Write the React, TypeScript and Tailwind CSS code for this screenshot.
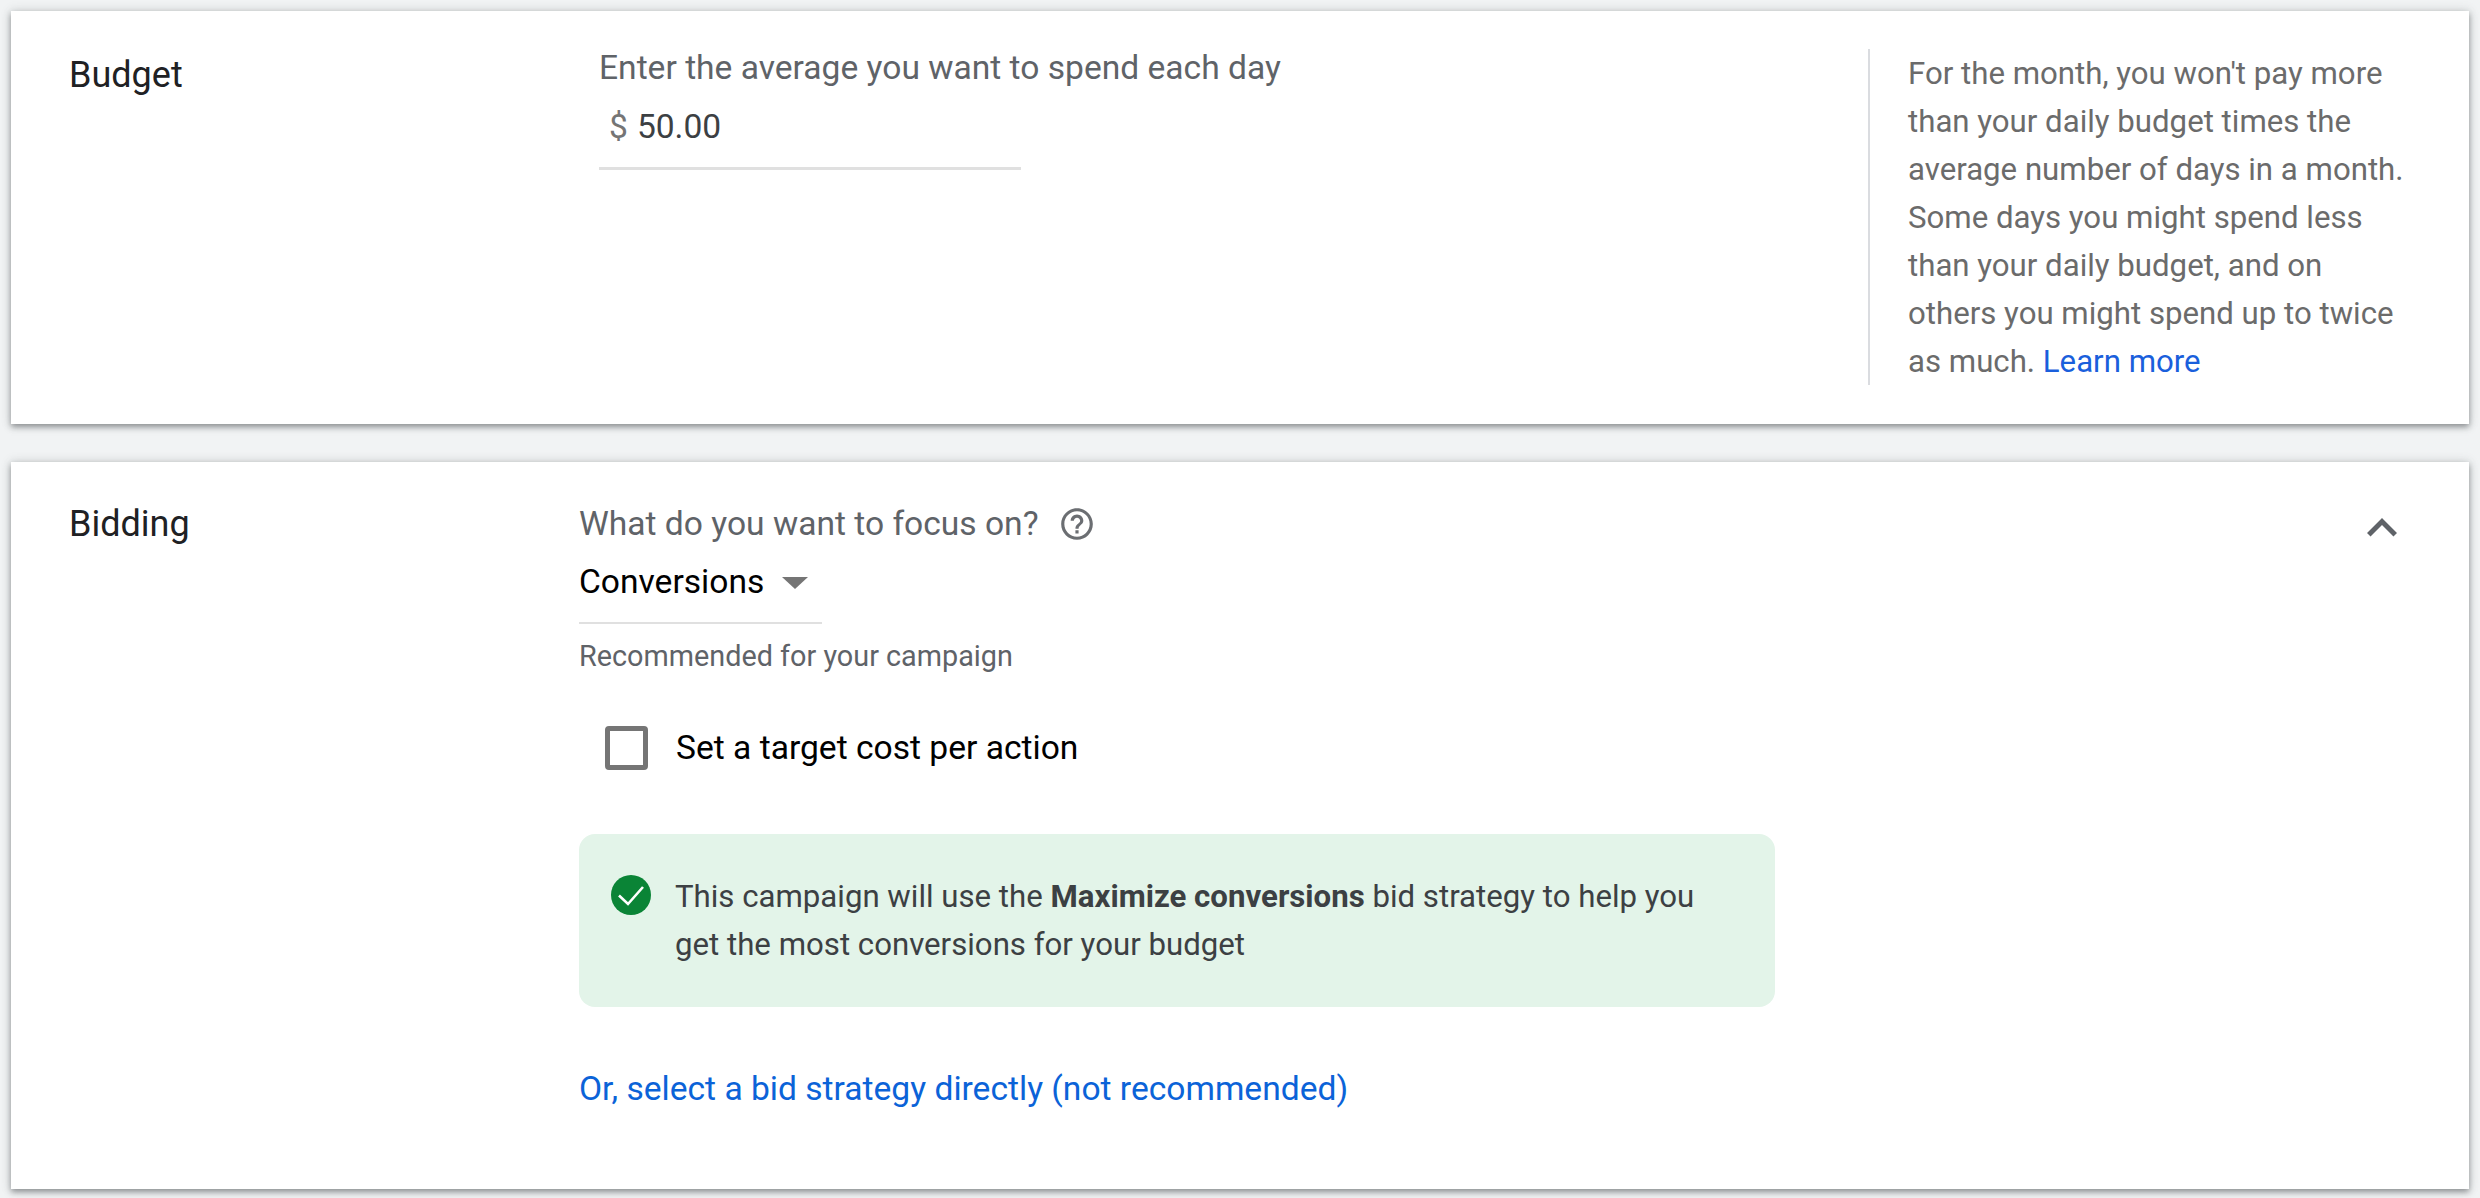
function CheckBadge() {
  return (
    <svg viewBox="0 0 40 40" className="w-[40px] h-[40px] shrink-0">
      <circle cx="20" cy="20" r="20" fill="#0a8436" />
      <path d="M8 20.5l9 8.5L32 12" fill="none" stroke="#ffffff" strokeWidth="2.6" />
    </svg>
  );
}

function HelpIcon() {
  return (
    <svg viewBox="0 0 24 24" className="w-[38px] h-[38px] fill-[#6b6e72]">
      <path d="M11 18h2v-2h-2v2zm1-16C6.48 2 2 6.48 2 12s4.48 10 10 10 10-4.48 10-10S17.52 2 12 2zm0 18c-4.41 0-8-3.59-8-8s3.59-8 8-8 8 3.59 8 8-3.59 8-8 8zm0-14c-2.21 0-4 1.79-4 4h2c0-1.1.9-2 2-2s2 .9 2 2c0 2-3 1.75-3 5h2c0-2.25 3-2.5 3-5 0-2.21-1.79-4-4-4z" />
    </svg>
  );
}

export default function App() {
  return (
    <div className="h-[1198px] bg-[#f1f3f4] px-[11px] pt-[11px] font-['Roboto',sans-serif] overflow-hidden">
      {/* Budget */}
      <section className="h-[413px] bg-white shadow-[0_3px_6px_rgba(60,64,67,0.5),0_0_10px_rgba(60,64,67,0.18)] flex pl-[58px]">
        <h2 className="w-[530px] shrink-0 pt-[40px] text-[36px] leading-[48px] text-[#202124] font-normal">Budget</h2>
        <div className="w-[422px] shrink-0 pt-[35px]">
          <p className="text-[33.6px] leading-[44px] text-[#5f6368] whitespace-nowrap">Enter the average you want to spend each day</p>
          <div className="h-[80px] border-b-[3px] border-[#e0e0e0] flex items-start pl-[10px] gap-[9px] pt-[8px] text-[33.6px] leading-[58px]">
            <span className="text-[#757575]">$</span>
            <span className="text-[#3c4043]">50.00</span>
          </div>
        </div>
        <aside className="ml-[847px] mt-[38px] h-[336px] w-[545px] border-l-2 border-[#dadce0] pl-[38px] pt-[1px] text-[31.2px] leading-[48px] text-[#6b6b6b]">
          For the month, you won't pay more than your daily budget times the average number of days in a month. Some days you might spend less than your daily budget, and on others you might spend up to twice as much. <a className="text-[#1a5fdc]">Learn more</a>
        </aside>
      </section>

      {/* Bidding */}
      <section className="mt-[38px] h-[727px] bg-white shadow-[0_3px_6px_rgba(60,64,67,0.5),0_0_10px_rgba(60,64,67,0.18)] flex pl-[58px] relative">
        <h2 className="w-[510px] shrink-0 pt-[38px] text-[36px] leading-[48px] text-[#202124] font-normal">Bidding</h2>
        <div className="w-[1200px] pt-[40px]">
          <div className="flex items-center gap-[19px] h-[44px]">
            <span className="text-[33.6px] text-[#5f6368]">What do you want to focus on?</span>
            <HelpIcon />
          </div>
          <div className="mt-[14px] w-[243px] h-[64px] border-b-2 border-[#e0e0e0] flex items-start gap-[18px] text-[33.6px] leading-[44px] text-black">
            <span>Conversions</span>
            <span className="mt-[17px] w-0 h-0 border-x-[13px] border-t-[12px] border-x-transparent border-t-[#757575]" />
          </div>
          <p className="mt-[10px] text-[28.8px] leading-[44px] text-[#5f6368]">Recommended for your campaign</p>
          <label className="mt-[48px] ml-[26px] flex items-center gap-[28px]">
            <span className="w-[43px] h-[44px] rounded-[4px] border-[5px] border-[#757575]" />
            <span className="text-[33.6px] leading-[44px] text-black">Set a target cost per action</span>
          </label>
          <div className="mt-[64px] w-[1196px] h-[173px] rounded-[16px] bg-[#e3f4e9] pl-[32px] pr-[72px] pt-[39px] flex gap-[24px]">
            <div className="pt-[2px]"><CheckBadge /></div>
            <p className="text-[31.2px] leading-[48px] text-[#3c4043]">
              This campaign will use the <b className="font-bold">Maximize conversions</b> bid strategy to help you get the most conversions for your budget
            </p>
          </div>
          <a className="block mt-[60px] text-[33.6px] leading-[44px] text-[#0b63d8]">Or, select a bid strategy directly (not recommended)</a>
        </div>
        <svg viewBox="0 0 24 24" className="absolute right-[57px] top-[36px] w-[60px] h-[60px] fill-[#5f6368]">
          <path d="M12 8l-6 6 1.41 1.41L12 10.83l4.59 4.58L18 14z" />
        </svg>
      </section>
    </div>
  );
}
